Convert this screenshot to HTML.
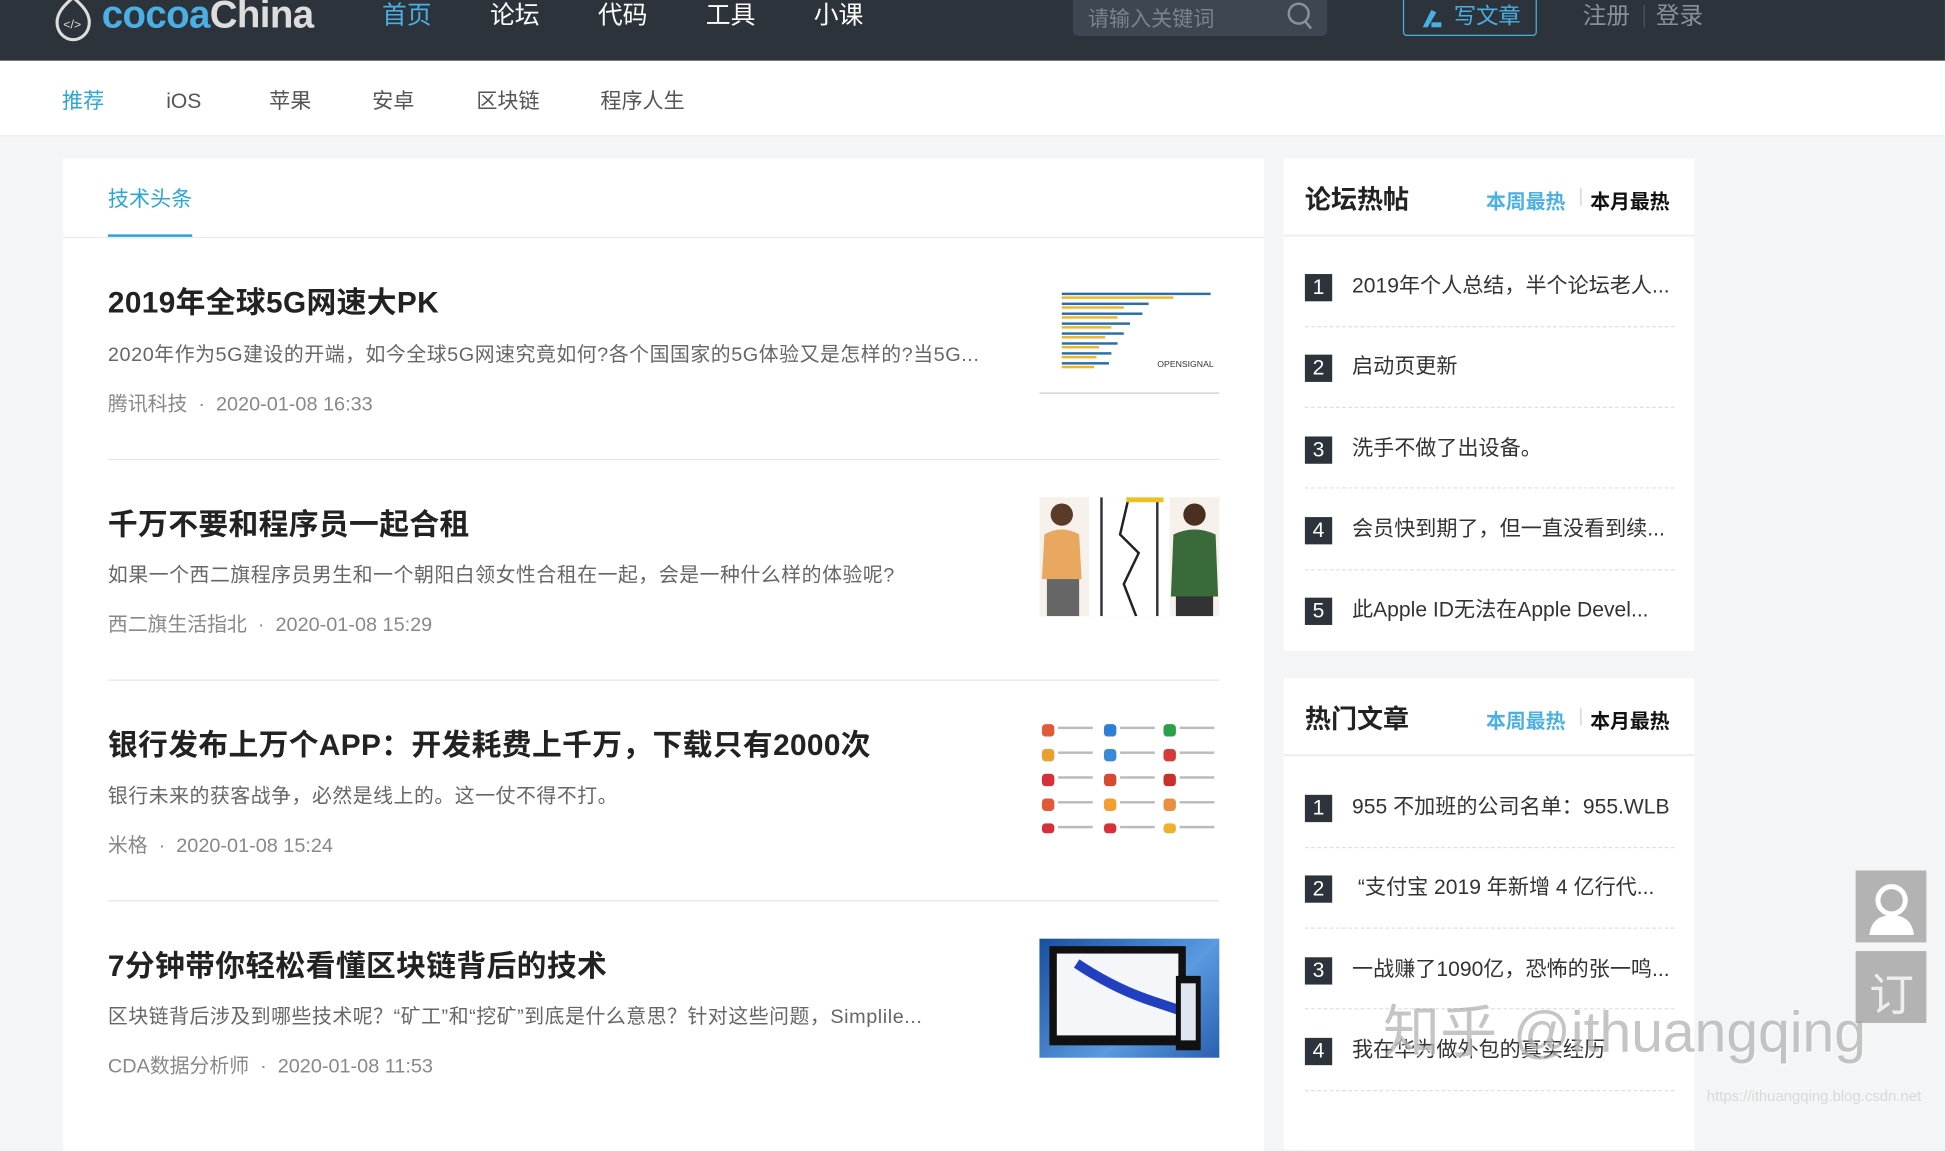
<!DOCTYPE html>
<html><head><meta charset="utf-8"><style>
*{margin:0;padding:0;box-sizing:border-box}
html,body{width:1945px;height:1116px;overflow:hidden;background:#f4f5f7}
#w{position:absolute;left:0;top:0;width:1568px;height:900px;transform:scale(1.2404,1.24);transform-origin:0 0;font-family:"Liberation Sans","Noto Sans CJK SC",sans-serif;}
.a{position:absolute;white-space:nowrap}
.hd{position:absolute;left:0;top:0;width:1568px;height:49px;background:#2d333b}
.nav{top:0;font-size:20px;color:#fff;line-height:26px}
.sub{top:70px;font-size:17px;color:#555;line-height:24px}
.card{position:absolute;background:#fff}
.t{font-size:24px;font-weight:bold;color:#222;left:87px;letter-spacing:0.3px}
.d{font-size:16px;color:#666;left:87px;letter-spacing:0.45px}
.m{font-size:16px;color:#888;left:87px}
.sep{position:absolute;left:87px;width:896px;height:1px;background:#e6e6e6}
.num{position:absolute;left:1052px;width:22px;height:22px;background:#2d333b;color:#fff;font-size:17px;text-align:center;line-height:22px}
.it{position:absolute;left:1090px;font-size:17px;color:#333;white-space:nowrap;line-height:22px}
.dash{position:absolute;left:1052px;width:298px;border-top:1px dashed #e0e0e0}
.sh{font-size:21px;font-weight:bold;color:#222;left:1052px}
.tb{font-size:16px;font-weight:bold}
.img{position:absolute;left:838px;width:145px;height:96px;overflow:hidden}
</style></head><body><div id="w">
<div class="hd"></div>
<svg class="a" style="left:42px;top:-4px" width="34" height="38" viewBox="0 0 34 38"><path d="M17 2 C10 8 4 14 4 22 C4 30 10 36 17 36 C24 36 30 30 30 22 C30 14 24 8 17 2Z" fill="none" stroke="#ddd" stroke-width="2.5"/><text x="9" y="27" font-size="10" fill="#ddd" font-family="Liberation Sans">&lt;/&gt;</text></svg>
<div class="a" style="left:82px;top:-6px;font-size:31px;font-weight:bold;color:#4ab0e4;letter-spacing:-0.5px">cocoa<span style="color:#ddd">China</span></div>
<div class="a nav" style="left:308px;color:#4ab0e4">首页</div>
<div class="a nav" style="left:395px">论坛</div>
<div class="a nav" style="left:482px">代码</div>
<div class="a nav" style="left:569px">工具</div>
<div class="a nav" style="left:656px">小课</div>
<div class="a" style="left:865px;top:-4px;width:205px;height:33px;background:#3d4651;border-radius:4px"></div>
<div class="a" style="left:877px;top:1px;font-size:17px;color:#7c838c">请输入关键词</div>
<svg class="a" style="left:1037px;top:1px" width="22" height="24"><circle cx="10" cy="10" r="8" fill="none" stroke="#8a9099" stroke-width="2"/><line x1="15" y1="16" x2="20" y2="22" stroke="#8a9099" stroke-width="2"/></svg>
<div class="a" style="left:1131px;top:-4px;width:108px;height:33px;border:1.5px solid #4ab0e4;border-radius:3px"></div>
<svg class="a" style="left:1144px;top:4px" width="20" height="20"><path d="M3 18 L10 4 L14 6 L7 18Z" fill="#4ab0e4"/><rect x="10" y="14" width="8" height="4" fill="#4ab0e4"/></svg>
<div class="a" style="left:1172px;top:0;font-size:18px;color:#4ab0e4;line-height:26px">写文章</div>
<div class="a" style="left:1276px;top:0;font-size:19px;color:#8a9099;line-height:28px">注册</div>
<div class="a" style="left:1325px;top:4px;width:1px;height:18px;background:#555"></div>
<div class="a" style="left:1335px;top:0;font-size:19px;color:#8a9099;line-height:28px">登录</div>

<div class="a" style="left:0;top:49px;width:1568px;height:61px;background:#fff;border-bottom:1px solid #ececec"></div>
<div class="a sub" style="left:50px;color:#2ba5d8">推荐</div>
<div class="a sub" style="left:134px">iOS</div>
<div class="a sub" style="left:217px">苹果</div>
<div class="a sub" style="left:300px">安卓</div>
<div class="a sub" style="left:384px">区块链</div>
<div class="a sub" style="left:484px">程序人生</div>

<div class="card" style="left:51px;top:128px;width:968px;height:800px"></div>
<div class="a" style="left:87px;top:149px;font-size:17px;color:#2ba5d8;line-height:24px">技术头条</div>
<div class="a" style="left:87px;top:189px;width:68px;height:3px;background:#2ba5d8"></div>
<div class="a" style="left:51px;top:191px;width:968px;height:1px;background:#ebebeb"></div>

<div class="a t" style="top:224px">2019年全球5G网速大PK</div>
<div class="a d" style="top:272px">2020年作为5G建设的开端，如今全球5G网速究竟如何?各个国国家的5G体验又是怎样的?当5G...</div>
<div class="a m" style="top:312px">腾讯科技 &nbsp;·&nbsp; 2020-01-08 16:33</div>
<div class="img" style="top:222px;background:#fff">
<svg width="145" height="96"><g fill="#2c6fa8"><rect x="18" y="14" width="120" height="2"/><rect x="18" y="22" width="70" height="2"/><rect x="18" y="30" width="65" height="2"/><rect x="18" y="38" width="55" height="2"/><rect x="18" y="46" width="50" height="2"/><rect x="18" y="54" width="45" height="2"/><rect x="18" y="62" width="40" height="2"/><rect x="18" y="70" width="38" height="2"/></g><g fill="#f0b62a"><rect x="18" y="17" width="90" height="2"/><rect x="18" y="25" width="50" height="2"/><rect x="18" y="33" width="45" height="2"/><rect x="18" y="41" width="40" height="2"/><rect x="18" y="49" width="35" height="2"/><rect x="18" y="57" width="30" height="2"/><rect x="18" y="65" width="28" height="2"/><rect x="18" y="73" width="26" height="2"/></g><text x="95" y="74" font-size="7" fill="#333">OPENSIGNAL</text><line x1="0" y1="95" x2="145" y2="95" stroke="#ccc"/></svg></div>
<div class="sep" style="top:370px"></div>

<div class="a t" style="top:403px">千万不要和程序员一起合租</div>
<div class="a d" style="top:450px">如果一个西二旗程序员男生和一个朝阳白领女性合租在一起，会是一种什么样的体验呢?</div>
<div class="a m" style="top:490px">西二旗生活指北 &nbsp;·&nbsp; 2020-01-08 15:29</div>
<div class="img" style="top:401px;background:#f6f1ea">
<svg width="145" height="96"><rect x="40" y="0" width="65" height="96" fill="#fff"/><line x1="50" y1="0" x2="50" y2="96" stroke="#333" stroke-width="2"/><line x1="95" y1="0" x2="95" y2="96" stroke="#333" stroke-width="2"/><path d="M72 0 L65 30 L80 45 L68 70 L78 96" fill="none" stroke="#222" stroke-width="2"/><rect x="70" y="0" width="30" height="4" fill="#f0c020"/><circle cx="18" cy="14" r="9" fill="#5a3a28"/><path d="M4 30 Q18 22 32 30 L34 66 L2 66Z" fill="#e8a860"/><rect x="6" y="66" width="26" height="30" fill="#666"/><circle cx="125" cy="14" r="9" fill="#4a3020"/><path d="M108 30 Q125 22 142 30 L144 80 L106 80Z" fill="#3a6a3a"/><rect x="110" y="80" width="30" height="16" fill="#333"/></svg></div>
<div class="sep" style="top:548px"></div>

<div class="a t" style="top:581px">银行发布上万个APP：开发耗费上千万，下载只有2000次</div>
<div class="a d" style="top:628px">银行未来的获客战争，必然是线上的。这一仗不得不打。</div>
<div class="a m" style="top:668px">米格 &nbsp;·&nbsp; 2020-01-08 15:24</div>
<div class="img" style="top:579px;background:#fff">
<svg width="145" height="96"><g>
<rect x="2" y="5" width="10" height="10" rx="3" fill="#e05a3a"/><rect x="52" y="5" width="10" height="10" rx="3" fill="#2f7ed8"/><rect x="100" y="5" width="10" height="10" rx="3" fill="#2aa04a"/>
<rect x="2" y="25" width="10" height="10" rx="3" fill="#e8a030"/><rect x="52" y="25" width="10" height="10" rx="3" fill="#3a8ad8"/><rect x="100" y="25" width="10" height="10" rx="3" fill="#d83a3a"/>
<rect x="2" y="45" width="10" height="10" rx="3" fill="#d8303a"/><rect x="52" y="45" width="10" height="10" rx="3" fill="#d84a30"/><rect x="100" y="45" width="10" height="10" rx="3" fill="#c8302a"/>
<rect x="2" y="65" width="10" height="10" rx="3" fill="#e05a3a"/><rect x="52" y="65" width="10" height="10" rx="3" fill="#f0a030"/><rect x="100" y="65" width="10" height="10" rx="3" fill="#e89040"/>
<rect x="2" y="85" width="10" height="8" rx="3" fill="#d8303a"/><rect x="52" y="85" width="10" height="8" rx="3" fill="#d8303a"/><rect x="100" y="85" width="10" height="8" rx="3" fill="#f0b030"/></g>
<g fill="#bbb"><rect x="15" y="7" width="28" height="2"/><rect x="65" y="7" width="28" height="2"/><rect x="113" y="7" width="28" height="2"/><rect x="15" y="27" width="28" height="2"/><rect x="65" y="27" width="28" height="2"/><rect x="113" y="27" width="28" height="2"/><rect x="15" y="47" width="28" height="2"/><rect x="65" y="47" width="28" height="2"/><rect x="113" y="47" width="28" height="2"/><rect x="15" y="67" width="28" height="2"/><rect x="65" y="67" width="28" height="2"/><rect x="113" y="67" width="28" height="2"/><rect x="15" y="87" width="28" height="2"/><rect x="65" y="87" width="28" height="2"/><rect x="113" y="87" width="28" height="2"/></g></svg></div>
<div class="sep" style="top:726px"></div>

<div class="a t" style="top:759px">7分钟带你轻松看懂区块链背后的技术</div>
<div class="a d" style="top:806px">区块链背后涉及到哪些技术呢？“矿工”和“挖矿”到底是什么意思？针对这些问题，Simplile...</div>
<div class="a m" style="top:846px">CDA数据分析师 &nbsp;·&nbsp; 2020-01-08 11:53</div>
<div class="img" style="top:757px;background:linear-gradient(135deg,#1a4fa0,#5a9ae0 60%,#2a60b0)">
<svg width="145" height="96"><rect x="8" y="6" width="110" height="80" fill="#111"/><rect x="14" y="12" width="98" height="66" fill="#f4f6fa"/><path d="M30 20 Q60 40 90 50 L120 60" stroke="#2040c0" stroke-width="8" fill="none"/><rect x="110" y="30" width="20" height="60" fill="#111"/><rect x="114" y="36" width="12" height="46" fill="#e0e6f0"/></svg></div>

<div class="card" style="left:1035px;top:128px;width:331px;height:397px"></div>
<div class="a sh" style="top:145px">论坛热帖</div>
<div class="a tb" style="left:1198px;top:149px;color:#4ab0e4">本周最热</div>
<div class="a" style="left:1274px;top:152px;width:1px;height:14px;background:#ccc"></div>
<div class="a tb" style="left:1282px;top:149px;color:#111">本月最热</div>
<div class="a" style="left:1035px;top:189px;width:331px;height:2px;background:#eef0f2"></div>
<div class="num" style="top:221px">1</div><div class="it" style="top:220px">2019年个人总结，半个论坛老人...</div><div class="dash" style="top:263px"></div>
<div class="num" style="top:286px">2</div><div class="it" style="top:285px">启动页更新</div><div class="dash" style="top:328px"></div>
<div class="num" style="top:352px">3</div><div class="it" style="top:351px">洗手不做了出设备。</div><div class="dash" style="top:393px"></div>
<div class="num" style="top:417px">4</div><div class="it" style="top:416px">会员快到期了，但一直没看到续...</div><div class="dash" style="top:459px"></div>
<div class="num" style="top:482px">5</div><div class="it" style="top:481px">此Apple ID无法在Apple Devel...</div>

<div class="card" style="left:1035px;top:547px;width:331px;height:380px"></div>
<div class="a sh" style="top:564px">热门文章</div>
<div class="a tb" style="left:1198px;top:568px;color:#4ab0e4">本周最热</div>
<div class="a" style="left:1274px;top:571px;width:1px;height:14px;background:#ccc"></div>
<div class="a tb" style="left:1282px;top:568px;color:#111">本月最热</div>
<div class="a" style="left:1035px;top:608px;width:331px;height:2px;background:#eef0f2"></div>
<div class="num" style="top:641px">1</div><div class="it" style="top:640px">955 不加班的公司名单：955.WLB</div><div class="dash" style="top:683px"></div>
<div class="num" style="top:706px">2</div><div class="it" style="top:705px">&nbsp;“支付宝 2019 年新增 4 亿行代...</div><div class="dash" style="top:748px"></div>
<div class="num" style="top:772px">3</div><div class="it" style="top:771px">一战赚了1090亿，恐怖的张一鸣...</div><div class="dash" style="top:813px"></div>
<div class="num" style="top:837px">4</div><div class="it" style="top:836px">我在华为做外包的真实经历</div><div class="dash" style="top:879px"></div>

<div class="a" style="left:1496px;top:702px;width:57px;height:58px;background:#b3b3b3"></div>
<svg class="a" style="left:1503px;top:708px" width="44" height="48"><circle cx="22" cy="18" r="11" fill="none" stroke="#fff" stroke-width="4"/><path d="M4 46 Q6 30 22 30 Q38 30 40 46Z" fill="#fff"/></svg>
<div class="a" style="left:1496px;top:767px;width:57px;height:58px;background:#b3b3b3"></div>
<div class="a" style="left:1507px;top:774px;font-size:36px;color:#eee">订</div>
<div class="a" style="left:1115px;top:796px;font-size:46px;color:rgba(150,150,150,0.55);text-shadow:1px 1px 1px rgba(255,255,255,.6)">知乎 @ithuangqing</div>
<div class="a" style="left:1376px;top:877px;font-size:12px;color:#d8d8d8">https://ithuangqing.blog.csdn.net</div>
</div></body></html>
